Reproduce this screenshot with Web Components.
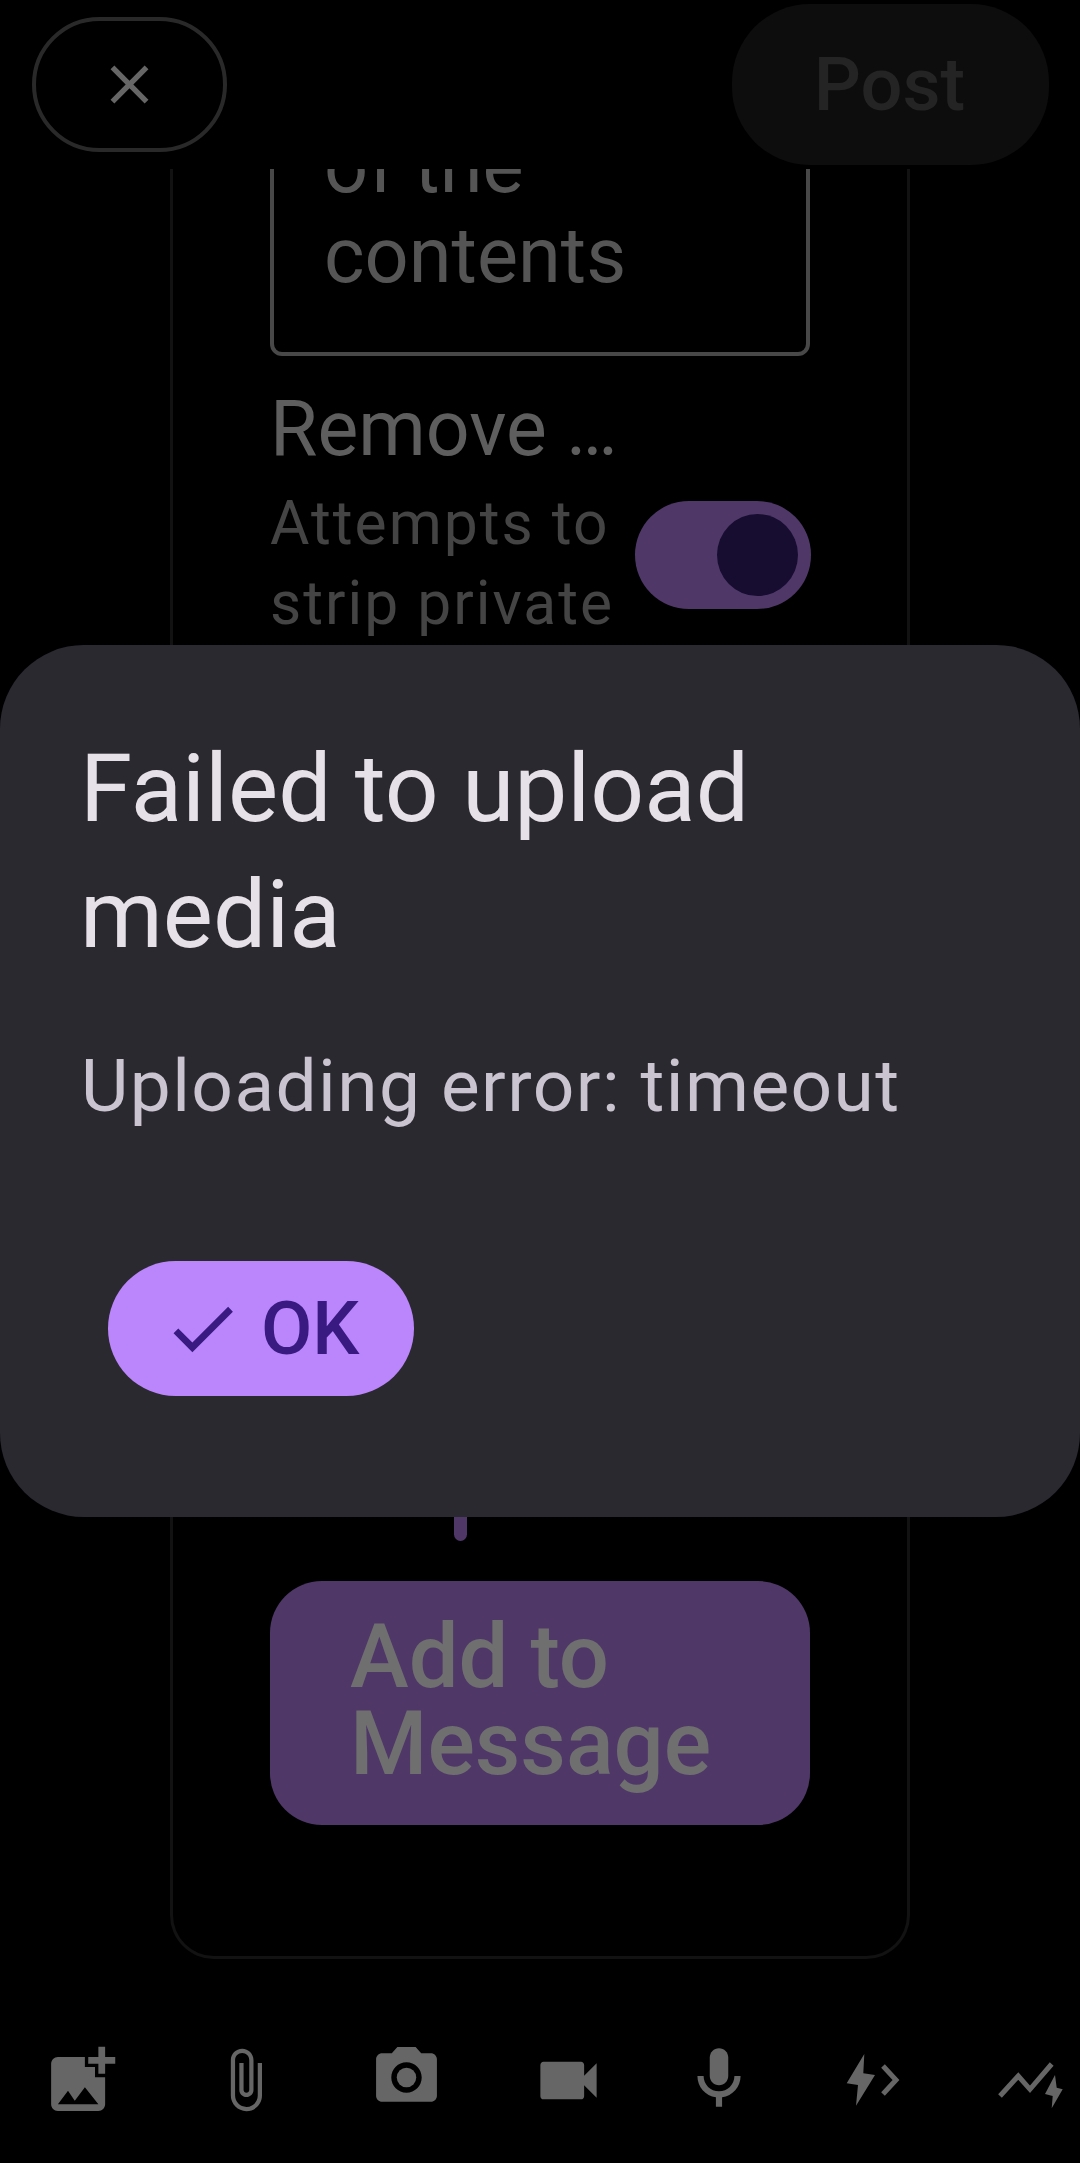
<!DOCTYPE html>
<html><head><meta charset="utf-8">
<style>
html,body{margin:0;padding:0;background:#000}
body{width:1080px;height:2163px;overflow:hidden;font-family:Roboto,"Liberation Sans",sans-serif}
</style></head>
<body>
<x-compose>
  <x-header slot="header"></x-header>
  <x-card slot="body">
    <x-field>of the<br>contents</x-field>
    <x-setting label="Remove …" hint="Attempts to|strip private"></x-setting>
    <x-hidden-track></x-hidden-track>
    <x-add-button>Add to<br>Message</x-add-button>
  </x-card>
  <x-toolbar slot="toolbar"></x-toolbar>
  <x-dialog slot="overlay" heading="Failed to upload media" body="Uploading error: timeout" action="OK"></x-dialog>
</x-compose>
<script>
function def(name, html, setup){
  customElements.define(name, class extends HTMLElement{
    constructor(){super();this.attachShadow({mode:'open'});}
    connectedCallback(){this.shadowRoot.innerHTML=html;if(setup)setup.call(this,this.shadowRoot);}
  });
}
def('x-compose',`<style>
:host{display:flex;flex-direction:column;position:relative;width:1080px;height:2163px;background:#000;overflow:hidden}
.body{flex:1;min-height:0;overflow:hidden;display:flex;flex-direction:column;justify-content:flex-end;align-items:center;padding-bottom:41px}
</style>
<slot name="header"></slot>
<div class="body"><slot name="body"></slot></div>
<slot name="toolbar"></slot>
<slot name="overlay"></slot>`);

def('x-header',`<style>
:host{display:flex;flex:none;height:169px;justify-content:space-between;align-items:center;padding:0 31px 0 32px;box-sizing:border-box}
.close{box-sizing:border-box;width:195px;height:135px;border:4px solid #292929;border-radius:68px;display:flex;align-items:center;justify-content:center}
.close svg{width:65px;height:65px;fill:#666;display:block}
.post{box-sizing:border-box;width:317px;height:161px;padding-right:2px;border-radius:78px;background:#0d0d0d;display:flex;align-items:center;justify-content:center;color:#242424;font:500 74px/1 Roboto,sans-serif}
</style>
<div class="close"><svg viewBox="0 0 24 24"><path d="M19 6.41 17.59 5 12 10.59 6.41 5 5 6.41 10.59 12 5 17.59 6.41 19 12 13.41 17.59 19 19 17.59 13.41 12z"/></svg></div>
<div class="post">Post</div>`);

def('x-card',`<style>
:host{display:flex;flex:none;flex-direction:column;box-sizing:border-box;width:740px;border:3px solid #121212;border-radius:0 0 44px 44px;padding:0 97px 131px;border-top:0}
</style><slot></slot>`);

def('x-field',`<style>
:host{display:block;box-sizing:border-box;width:540px;border:4px solid #484848;border-radius:12px;padding:0 50px 51px;color:#555;font:400 77.5px/90px Roboto,sans-serif}
</style><slot></slot>`);

def('x-setting',`<style>
:host{display:block;margin-top:27px;width:540px}
.label{color:#5e5e5e;font:400 77px/92px Roboto,sans-serif}
.row{display:flex;justify-content:space-between;align-items:flex-start;margin-top:9px}
.hint{color:#444;font:400 60.5px/80px Roboto,sans-serif;letter-spacing:2px}
.sw{flex:none;box-sizing:border-box;width:176px;height:108px;margin:17px -1px 0 0;border-radius:54px;background:#4f3868;display:flex;justify-content:flex-end;align-items:center;padding-right:13px}
.th{width:81px;height:82px;border-radius:50%;background:#170d30}
.line{display:block}
</style>
<div class="label"></div>
<div class="row"><div class="hint"></div><div class="sw"><div class="th"></div></div></div>`,function(r){
  r.querySelector('.label').textContent=this.getAttribute('label');
  const h=r.querySelector('.hint');
  this.getAttribute('hint').split('|').forEach(t=>{const s=document.createElement('span');s.className='line';s.textContent=t;h.appendChild(s);});
});

def('x-hidden-track',`<style>
:host{display:block;height:937px;position:relative}
.bar{position:absolute;left:184px;bottom:40px;width:13px;height:60px;border-radius:0 0 7px 7px;background:#4f3868}
</style><div class="bar"></div>`);

def('x-add-button',`<style>
:host{display:block;box-sizing:border-box;width:540px;height:244px;border-radius:52px;background:#4f3868;color:#6f6f6f;padding:33px 80px 0;font:500 88.5px/87px Roboto,sans-serif}
</style><slot></slot>`);

const ICONS=[
 {w:163,s:81,dy:0,svg:'<svg viewBox="0 0 24 24"><path d="M19 7v2.99s-1.99.01-2 0V7h-3s.01-1.99 0-2h3V2h2v3h3v2h-3zm-3 4V8h-3V5H5c-1.1 0-2 .9-2 2v12c0 1.1.9 2 2 2h12c1.1 0 2-.9 2-2v-8h-3zM5 19l3-4 2 3 3-4 4 5H5z"/></svg>'},
 {w:163,s:68,dy:0,svg:'<svg viewBox="0 0 24 24"><path d="M16.5 6v11.5c0 2.21-1.79 4-4 4s-4-1.79-4-4V5c0-1.38 1.12-2.5 2.5-2.5s2.5 1.12 2.5 2.5v10.5c0 .55-.45 1-1 1s-1-.45-1-1V6H10v9.5c0 1.38 1.12 2.5 2.5 2.5s2.5-1.12 2.5-2.5V5c0-2.21-1.79-4-4-4S7 2.79 7 5v12.5c0 3.04 2.46 5.5 5.5 5.5s5.5-2.46 5.5-5.5V6h-1.5z"/></svg>'},
 {w:160,s:73,dy:-3,svg:'<svg viewBox="0 0 24 24"><circle cx="12" cy="12" r="3.2"/><path d="M9 2 7.17 4H4c-1.1 0-2 .9-2 2v12c0 1.1.9 2 2 2h16c1.1 0 2-.9 2-2V6c0-1.1-.9-2-2-2h-3.17L15 2H9zm3 15c-2.76 0-5-2.24-5-5s2.24-5 5-5 5 2.24 5 5-2.24 5-5 5z"/></svg>'},
 {w:164,s:75,dy:0,svg:'<svg viewBox="0 0 24 24"><path d="M17 10.5V7c0-.55-.45-1-1-1H4c-.55 0-1 .45-1 1v10c0 .55.45 1 1 1h12c.55 0 1-.45 1-1v-3.5l4 4v-11l-4 4z"/></svg>'},
 {w:138,s:74,dy:-1,svg:'<svg viewBox="0 0 24 24"><path d="M12 14c1.66 0 3-1.34 3-3V5c0-1.66-1.34-3-3-3S9 3.34 9 5v6c0 1.66 1.34 3 3 3z"/><path d="M17 11c0 2.76-2.24 5-5 5s-5-2.24-5-5H5c0 3.53 2.61 6.43 6 6.92V21h2v-3.08c3.39-.49 6-3.39 6-6.92h-2z"/></svg>'},
 {w:168,s:60,h:60,dy:0,svg:'<svg viewBox="12 10 60 60"><path d="M34.3 14 16.7 43.3 28 45 26 65.7 45 35 33.3 33.3z"/><path d="M53 26 66 40 53 54" fill="none" stroke="#666" stroke-width="5"/></svg>'},
 {w:148,s:70,h:60,dy:0,svg:'<svg viewBox="165 10 70 60"><path d="M170 56 188.3 36 200 49.3 221.7 24" fill="none" stroke="#666" stroke-width="5"/><path d="M225 35 215 54 222.7 56 221.7 68.3 232.7 49.3 226.7 47.7z"/></svg>'}
];
def('x-toolbar',`<style>
:host{display:flex;flex:none;height:163px;align-items:flex-start;padding-top:19px;box-sizing:border-box}
.b{flex:none;height:122px;display:flex;align-items:center;justify-content:center}
svg{display:block;width:100%;height:100%;fill:#666}
.i{display:block}
</style>`,function(r){
  ICONS.forEach(ic=>{
    const b=document.createElement('div');b.className='b';b.style.width=ic.w+'px';
    b.style.paddingBottom=(ic.dy<0?-ic.dy*2:0)+'px';b.style.paddingTop=(ic.dy>0?ic.dy*2:0)+'px';b.style.boxSizing='border-box';
    const i=document.createElement('div');i.className='i';i.style.width=ic.s+'px';i.style.height=(ic.h||ic.s)+'px';i.innerHTML=ic.svg;
    b.appendChild(i);r.appendChild(b);
  });
});

def('x-dialog',`<style>
:host{position:absolute;left:0;top:645px;width:1080px;height:872px;box-sizing:border-box;background:#2b2930;border-radius:84px;padding:81px 80px 0;display:flex;flex-direction:column;align-items:flex-start}
h2{margin:0;font:400 94.5px/126px Roboto,sans-serif;color:#e6e0e9;width:800px}
p{margin:63px 0 0 1px;font:400 73px/90px Roboto,sans-serif;color:#cac4d0;letter-spacing:1.42px}
.btn{margin:130px 0 0 28px;box-sizing:border-box;width:306px;height:135px;border-radius:68px;background:#bb86fc;display:flex;align-items:center;padding-left:54px;color:#381a80;font:500 74.5px/1 Roboto,sans-serif;gap:18px}
svg{width:81px;height:81px;fill:#381a80;flex:none}
span{padding-top:2px}
</style>
<h2></h2><p></p>
<div class="btn"><svg viewBox="0 0 24 24"><path d="M9 16.17 4.83 12l-1.41 1.41L9 19 21 7l-1.41-1.41z"/></svg><span></span></div>`,function(r){
  r.querySelector('h2').textContent=this.getAttribute('heading');
  r.querySelector('p').textContent=this.getAttribute('body');
  r.querySelector('span').textContent=this.getAttribute('action');
});
</script>
</body></html>
